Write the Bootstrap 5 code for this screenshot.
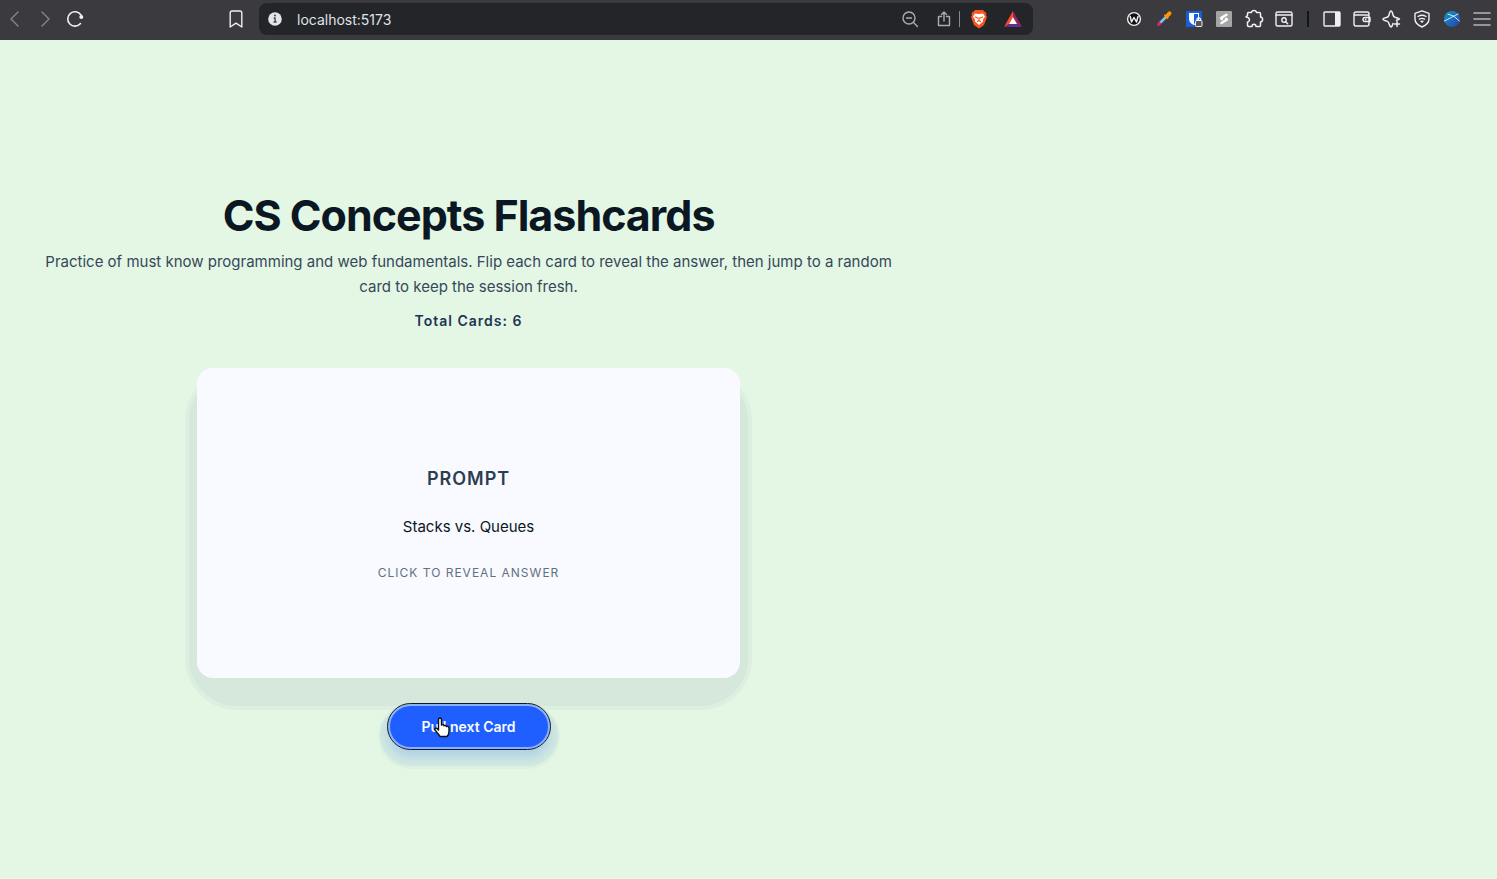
<!DOCTYPE html>
<html lang="en">
<head>
<meta charset="utf-8">
<meta name="viewport" content="width=device-width, initial-scale=1">
<title>CS Concepts Flashcards</title>
<link href="https://cdn.jsdelivr.net/npm/bootstrap@5.3.0/dist/css/bootstrap.min.css" rel="stylesheet">
<style>
  body { background: #e4f7e4; font-family: Inter, "Liberation Sans", sans-serif; color: #0b1723; }
  .toolbar { height: 40px; background: #3b3a3e; padding-bottom: 2px; }
  .toolbar button { width: 30px; height: 30px; padding: 0; border: 0; background: none; color: #eef0f2; display: flex; align-items: center; justify-content: center; flex: none; }
  .toolbar svg { display: block; fill: none; stroke: currentColor; stroke-width: 1.4; stroke-linecap: round; stroke-linejoin: round; }
  .tools-left { width: 259px; }
  .tools-left .dim { color: #85868b; }
  .tools-right { width: 464px; }
  .address { height: 32px; background: #242529; border-radius: 8px; padding: 0 5px 0 8px; }
  .address input { font-family: Inter, sans-serif; background: none; border: 0; outline: 0; color: #dfe3e6; font-size: 14px; padding: 0; margin-left: 14px; }
  .address .muted { color: #a9acb1; }
  .bar-line { width: 1px; height: 16px; background: #85888d; }
  .dark-line { width: 2px; height: 16px; background: #0b1723; margin: 0 8px; }
  .deck { width: 62.6%; padding: 149px 32px 48px; }
  .deck-title { font-size: 43px; font-weight: 700; line-height: 52px; letter-spacing: -1px; margin-bottom: 8px; }
  .deck-intro { font-size: 15px; line-height: 25px; color: #36475a; margin-bottom: 12px; }
  .deck-total { font-size: 14px; line-height: 20px; font-weight: 600; letter-spacing: 1px; color: #1e3553; margin-bottom: 37px; }
  .flash { position: relative; isolation: isolate; width: 100%; max-width: 543px; min-height: 310px; border: 0; padding: 4px 0 0; background: #f8faff; border-radius: 16px; color: inherit; }
  .flash::before { content: ""; position: absolute; z-index: -2; inset: 1px -12px -32px; border-radius: 52px; border: 4px solid #ddefe0; background: #d6e8db; }
  .flash::after { content: ""; position: absolute; z-index: -1; inset: 0; border-radius: 16px; background: #f8faff; }
  .flash-label { font-size: 18px; line-height: 24px; font-weight: 600; letter-spacing: 1px; color: #2c3e50; }
  .flash-text { font-size: 15px; line-height: 24px; }
  .flash-hint { font-size: 12px; line-height: 20px; letter-spacing: 1px; color: #617181; }
  .next-btn { position: relative; width: 162px; height: 45px; margin-top: 26px; padding: 0; border: 2px solid #8bb2f8; border-radius: 24px; background: #1f5fff; color: #f8faff; font-size: 14px; font-weight: 600; outline: 1px solid #101a26; box-shadow: 0 8px 8px rgba(100,150,245,.28), 0 9px 0 8px rgba(80,130,230,.08), 0 10px 0 10px rgba(80,130,180,.05); }
  .pointer { position: absolute; left: 42px; top: 10px; }
</style>
<script src="https://cdn.jsdelivr.net/npm/bootstrap@5.3.0/dist/js/bootstrap.bundle.min.js"></script>
</head>
<body>
<header class="toolbar d-flex align-items-center">
  <div class="tools-left d-flex align-items-center flex-shrink-0">
    <button class="dim" aria-label="Back"><svg width="20" height="20" viewBox="0 0 20 20"><path d="M13 3 6 10l7 7"/></svg></button>
    <button class="dim" aria-label="Forward"><svg width="20" height="20" viewBox="0 0 20 20"><path d="m7 3 7 7-7 7"/></svg></button>
    <button aria-label="Reload"><svg width="20" height="20" viewBox="0 0 20 20"><path stroke-width="1.600" d="M15.500 14.500A7.200 7.200 0 1 1 16 6"/><circle cx="16.300" cy="8" r="2" fill="currentColor" stroke="none"/></svg></button>
    <button class="ms-auto me-2" aria-label="Bookmark"><svg width="20" height="20" viewBox="0 0 20 20"><path d="M4.200 3.800Q4.200 2 6 2h8q1.800 0 1.800 1.800V18L10 14.200 4.200 18Z"/></svg></button>
  </div>
  <div class="address d-flex align-items-center flex-grow-1">
    <svg width="16" height="16" viewBox="0 0 16 16"><circle cx="8" cy="8" r="6.800" fill="#e2e6e8" stroke="none"/><path d="M7.200 7h.900v4M7 11h2.200" stroke="#45484c"/><circle cx="8" cy="4.500" r="1" fill="#45484c" stroke="none"/></svg>
    <input class="flex-grow-1" type="text" value="localhost:5173" aria-label="Address">
    <button class="muted" aria-label="Zoom out"><svg width="18" height="18" viewBox="0 0 18 18"><circle cx="8" cy="8" r="6"/><path d="m12.500 12.500 4 4M5.500 8h5"/></svg></button>
    <button class="muted ms-1" aria-label="Share"><svg width="18" height="18" viewBox="0 0 18 18"><path d="M6.500 6.500h-3v9h11v-9h-3M9 11V2M6.500 4.500 9 2l2.500 2.500"/></svg></button>
    <span class="bar-line"></span>
    <button class="ms-1" aria-label="Shields"><svg width="18" height="20" viewBox="0 0 18 20"><path fill="#fb5420" stroke="none" d="m5 1-2 2-1.500 1L2 6 1 8l3 8 5 3.500L14 16l3-8-1-2 .5-2L15 3l-2-2Z"/><path fill="#fff" stroke="none" d="m5 4.500-2 3 2 3v2l4 3.500 4-3.500v-2l2-3-2-3-4 .5Z"/><path stroke="#fb5420" stroke-width="1.200" d="m5.500 8 2 1M12.500 8l-2 1M9 8.500V11M7.500 12.500 9 11.500l1.500 1"/></svg></button>
    <button class="ms-1" aria-label="Rewards"><svg width="20" height="18" viewBox="0 0 20 18"><g stroke="none"><path fill="#ff4b24" d="M10 1v6l-4 7-5 3Z"/><path fill="#9e1f63" d="M10 1v6l4 7 5 3Z"/><path fill="#662d91" d="m1 17 5-3h8l5 3Z"/><path fill="#fff" d="m10 7-4 7h8Z"/></g></svg></button>
  </div>
  <div class="tools-right d-flex align-items-center justify-content-end flex-shrink-0">
    <button aria-label="Wappalyzer"><svg width="16" height="16" viewBox="0 0 16 16"><circle cx="8" cy="8" r="6.400" fill="#111"/><path d="M4.200 5.500 5.500 11 8 6.500l2.500 4.500L12 5.500" stroke-width="1.500"/></svg></button>
    <button aria-label="Color picker"><svg width="18" height="18" viewBox="0 0 18 18"><path d="m5 13 6-6" stroke="#83bcf5" stroke-width="2.600"/><path d="m3.500 14.500 1-1" stroke="#e91e63" stroke-width="3"/><path d="m12 6 2.500-2.700" stroke="#ff9500" stroke-width="4"/><path d="m10 5.500 2.500 2.500" stroke="#ff9500" stroke-width="2"/></svg></button>
    <button aria-label="Password vault"><svg width="18" height="18" viewBox="0 0 18 18"><path fill="#175ddc" stroke="none" d="M1 1h16v16H1z"/><path fill="#fff" stroke="none" d="M4 3h10v6q0 4-5 6-5-2-5-6Z"/><path fill="#175ddc" stroke="none" d="M9 4h4v5q0 3-4 5Z"/><rect x="10.500" y="10.500" width="6.500" height="6" rx="1" fill="#555" stroke="#eee" stroke-width="1"/><path stroke="#eee" d="M12 10V9q1.700-2.500 3.500 0v1"/></svg></button>
    <button aria-label="Scribe"><svg width="18" height="18" viewBox="0 0 18 18"><rect x="1" y="1" width="16" height="16" rx="1" fill="#a5a5a6" stroke="none"/><path stroke="#fff" stroke-width="2.400" d="m6 8 5.500-3.200M6 8.200l1 .8M6.500 13l5.500-3.500M11 8.800l1 .7"/></svg></button>
    <button aria-label="Extensions"><svg width="20" height="20" viewBox="0 0 20 20"><path stroke-width="1.500" d="M4.500 3.500h3c.4-2.600 4.600-2.600 5 0h3q1 0 1 1V8c2.800.4 2.800 4.600 0 5v3.500q0 1-1 1H12c0-3-4-3-4 0H4.500q-1 0-1-1V13c2.800-.4 2.800-4.600-1.500-5 0-1 1.500-.5 1.500-1.500v-2q0-1 1-1Z"/></svg></button>
    <button aria-label="Search page"><svg width="20" height="20" viewBox="0 0 20 20"><rect x="2" y="3" width="16" height="14" rx="1.500"/><path d="M2 6h16"/><circle cx="10" cy="11" r="2.200"/><path d="m11.700 12.700 2 2"/></svg></button>
    <span class="dark-line"></span>
    <button aria-label="Sidebar"><svg width="18" height="18" viewBox="0 0 18 18"><rect x="1" y="2" width="16" height="14" rx="1"/><path fill="currentColor" stroke="none" d="M12 2h5v14h-5z"/></svg></button>
    <button aria-label="Wallet"><svg width="18" height="18" viewBox="0 0 18 18"><path d="M16 5V3.500Q16 2 14 2H3Q1 2 1 4v10q0 2 2 2h11q2 0 2-2V6q0-1-2-1H2M17 7.500h-5q-2 0-2 2t2 2h5ZM12.500 9.500h.500"/></svg></button>
    <button aria-label="AI assistant"><svg width="20" height="20" viewBox="0 0 20 20"><path stroke-width="1.500" d="M9 2q1.200 0 2 4 .5 2 2.500 2.500 4 1 4 1.500t-3 1.200M9 2Q7.800 2 7 6q-.5 2-2.500 2.500-3.500.8-3.500 1.700t3.500 1.700Q6.500 12.500 7 14.500 8 18 9 18q1 0 2-3.500M15 12.500v5M12.500 15h5"/></svg></button>
    <button aria-label="VPN"><svg width="18" height="20" viewBox="0 0 18 20"><path d="m9 1.800 7 2.500V10q0 5-7 8-7-3-7-8V4.300ZM5 7.500q4-2.500 8 0M6.500 10.200q2.500-1.600 5 0"/><path fill="currentColor" stroke="none" d="M7 12q2-1 4 0l-2 2Z"/></svg></button>
    <button aria-label="Profile"><svg width="18" height="18" viewBox="0 0 18 18"><defs><linearGradient id="globe" x2="1" y2="1"><stop stop-color="#109bc5"/><stop offset="1" stop-color="#2b3fae"/></linearGradient></defs><circle cx="9" cy="9" r="8" fill="url(#globe)" stroke="none"/><path stroke="#d5eefa" stroke-width="1" d="M1.500 11Q7 8 15 4M5 4q6 1 11.500 7"/></svg></button>
    <button aria-label="Menu"><svg width="20" height="18" viewBox="0 0 20 18"><path stroke="#b6b7ba" stroke-width="1.600" d="M2 3h16M2 9h16M2 15h16"/></svg></button>
  </div>
</header>
<main class="deck d-flex flex-column align-items-center text-center">
  <h1 class="deck-title">CS Concepts Flashcards</h1>
  <p class="deck-intro">Practice of must know programming and web fundamentals. Flip each card to reveal the answer, then jump to a random card to keep the session fresh.</p>
  <p class="deck-total">Total Cards: 6</p>
  <button class="flash d-flex flex-column align-items-center justify-content-center gap-4">
    <span class="flash-label">PROMPT</span>
    <span class="flash-text">Stacks vs. Queues</span>
    <span class="flash-hint">CLICK TO REVEAL ANSWER</span>
  </button>
  <button class="next-btn">Pull next Card
    <svg class="pointer" width="20" height="24" viewBox="0 0 20 24" aria-hidden="true"><path fill="#fff" stroke="#111" stroke-width="1.400" stroke-linejoin="round" d="M6.500 14V4q0-2 1.500-2t1.500 2v5q2-1 2.500.7 2-.8 2.500.8 2.500-.5 2.500 2v3q0 3-2 5H8q-1-2-3-4l-2.300-3q.3-2 2.300-1Z"/></svg>
  </button>
</main>
</body>
</html>
